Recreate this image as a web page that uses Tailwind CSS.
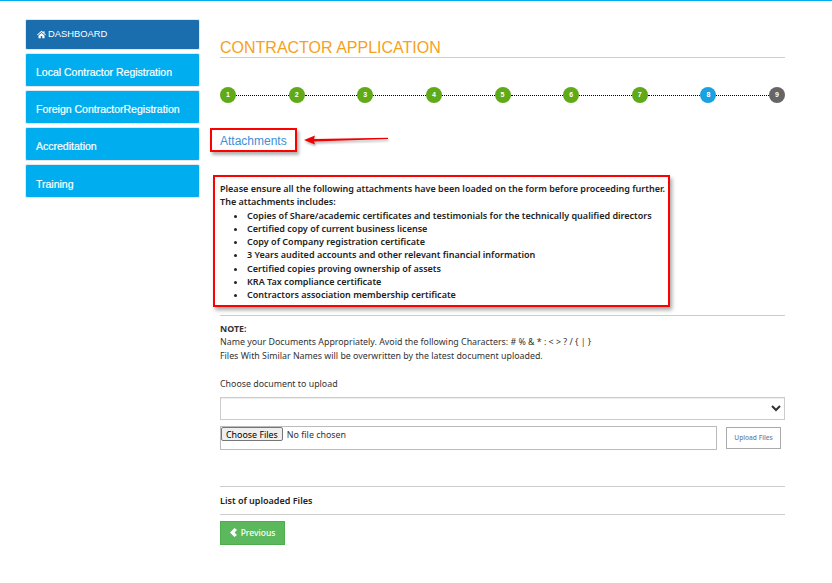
<!DOCTYPE html>
<html lang="en">
<head>
  <meta charset="UTF-8">
  <title>Contractor Application</title>
  <script src="https://cdn.jsdelivr.net/npm/@tailwindcss/browser@4"></script>
</head>
<body class="bg-white font-['Noto_Sans',sans-serif] text-[8.83px] text-[#333]">
  <div class="h-[583px] overflow-hidden border-t border-[#00aeef] flex items-start">
    <!-- sidebar -->
    <nav class="ml-[25px] mt-[18px] w-[175px] flex flex-col gap-[3px] font-['Liberation_Sans',sans-serif] text-white">
      <a class="h-[31px] flex items-center gap-[2px] pl-[11px] rounded-[2px] bg-[#1a6eae] border border-[#e4e8ec] text-[9.4px]">
        <svg class="w-[9px] h-[9px]" viewBox="0 0 12 12" fill="white"><path d="M6 1 0 6.200l.8.900L6 2.600l5.200 4.500.8-.9-2-1.700V1.500H8.500v1.400zM2 7.400V11h3V8h2v3h3V7.400L6 3.900z"/></svg>
        DASHBOARD
      </a>
      <a class="h-[34px] flex items-center pl-[10px] pt-[5px] rounded-[2px] bg-[#00aeef] border border-[#e4e8ec] text-[10.5px] [-webkit-text-stroke:0.2px_white]">Local Contractor Registration</a>
      <a class="h-[34px] flex items-center pl-[10px] pt-[5px] rounded-[2px] bg-[#00aeef] border border-[#e4e8ec] text-[10.5px] [-webkit-text-stroke:0.2px_white]">Foreign ContractorRegistration</a>
      <a class="h-[34px] flex items-center pl-[10px] pt-[5px] rounded-[2px] bg-[#00aeef] border border-[#e4e8ec] text-[10.5px] [-webkit-text-stroke:0.2px_white]">Accreditation</a>
      <a class="h-[34px] flex items-center pl-[10px] pt-[7px] rounded-[2px] bg-[#00aeef] border border-[#e4e8ec] text-[10.5px] [-webkit-text-stroke:0.2px_white]">Training</a>
    </nav>

    <!-- main -->
    <main class="ml-[20px] w-[565px]">
      <h1 class="mt-[37px] h-[20px] border-b border-[#bcd5dc] font-['Liberation_Sans',sans-serif] text-[16px] leading-[19px] text-[#f7a11a]">CONTRACTOR APPLICATION</h1>

      <!-- steps -->
      <div class="mt-[29px] flex items-center font-['Liberation_Sans',sans-serif] text-[7px] font-bold text-white">
        <span class="w-[16px] h-[16px] rounded-full bg-[#60a917] flex items-center justify-center">1</span>
        <span class="flex-1 border-t-[1.5px] border-dotted border-black"></span>
        <span class="w-[16px] h-[16px] rounded-full bg-[#60a917] flex items-center justify-center">2</span>
        <span class="flex-1 border-t-[1.5px] border-dotted border-black"></span>
        <span class="w-[16px] h-[16px] rounded-full bg-[#60a917] flex items-center justify-center">3</span>
        <span class="flex-1 border-t-[1.5px] border-dotted border-black"></span>
        <span class="w-[16px] h-[16px] rounded-full bg-[#60a917] flex items-center justify-center">4</span>
        <span class="flex-1 border-t-[1.5px] border-dotted border-black"></span>
        <span class="w-[16px] h-[16px] rounded-full bg-[#60a917] flex items-center justify-center">5</span>
        <span class="flex-1 border-t-[1.5px] border-dotted border-black"></span>
        <span class="w-[16px] h-[16px] rounded-full bg-[#60a917] flex items-center justify-center">6</span>
        <span class="flex-1 border-t-[1.5px] border-dotted border-black"></span>
        <span class="w-[16px] h-[16px] rounded-full bg-[#60a917] flex items-center justify-center">7</span>
        <span class="flex-1 border-t-[1.5px] border-dotted border-black"></span>
        <span class="w-[16px] h-[16px] rounded-full bg-[#1ba1e2] flex items-center justify-center">8</span>
        <span class="flex-1 border-t-[1.5px] border-dotted border-black"></span>
        <span class="w-[16px] h-[16px] rounded-full bg-[#666] flex items-center justify-center">9</span>
      </div>

      <!-- attachments heading + arrow -->
      <div class="mt-[25px] -ml-[10px] flex items-center">
        <div class="w-[87px] h-[24px] border-2 border-[#ff0000] shadow-[2px_3px_3px_rgba(0,0,0,0.3)] pl-[8px] pt-[1px] flex items-center font-['Liberation_Sans',sans-serif] text-[12px] text-[#3d8fd8]">Attachments</div>
        <svg class="ml-[6px] drop-shadow-[1px_2px_1px_rgba(0,0,0,0.3)]" width="86" height="14" viewBox="0 0 86 14"><path d="M1 7 12 2.500 11 6 85 4.800V6L11 8.500 12 11.500z" fill="#f00000"/></svg>
      </div>

      <!-- required list -->
      <div class="mt-[23px] -ml-[7px] w-[457px] h-[132px] border-2 border-[#ff0000] shadow-[2px_3px_4px_rgba(0,0,0,0.35)] pl-[5px] pt-[5px] text-[9.02px] font-semibold leading-[13.3px] text-[#222]">
        <p>Please ensure all the following attachments have been loaded on the form before proceeding further.</p>
        <p>The attachments includes:</p>
        <ul class="list-disc pl-[27px]">
          <li>Copies of Share/academic certificates and testimonials for the technically qualified directors</li>
          <li>Certified copy of current business license</li>
          <li>Copy of Company registration certificate</li>
          <li>3 Years audited accounts and other relevant financial information</li>
          <li>Certified copies proving ownership of assets</li>
          <li>KRA Tax compliance certificate</li>
          <li>Contractors association membership certificate</li>
        </ul>
      </div>

      <div class="mt-[8px] border-t border-[#ccc] pt-[7px] leading-[13.3px]">
        <p class="font-bold">NOTE:</p>
        <p>Name your Documents Appropriately. Avoid the following Characters: # % &amp; * : &lt; &gt; ? / { | }</p>
        <p>Files With Similar Names will be overwritten by the latest document uploaded.</p>
      </div>

      <label class="block mt-[15px] leading-[13px]">Choose document to upload</label>
      <select class="block mt-[6px] w-full h-[23px] border border-[#ccc] shadow-[inset_0_1px_1px_rgba(0,0,0,0.075)]"><option></option></select>

      <div class="mt-[6px] flex items-start">
        <input type="file" multiple class="w-[497px] h-[24px] pb-[2px] border border-[#bbb] text-[8.9px] file:h-[14px] file:px-[4px] file:mr-[4px] file:bg-[#efefef] file:border file:border-[#767676] file:rounded-[2px] file:text-black">
        <button class="ml-[9px] mt-[1px] w-[55px] h-[22px] border border-[#aaa] text-[6.6px] font-medium text-[#6b7fa0]">Upload Files</button>
      </div>

      <div class="mt-[36px] border-t border-[#ccc] h-[28px] flex items-center text-[9px] font-semibold text-[#222]">List of uploaded Files</div>
      <div class="border-t border-[#ccc]"></div>

      <button class="mt-[6px] w-[65px] h-[24px] bg-[#5cb85c] border border-[#4cae4c] text-white text-[8.5px] font-medium flex items-center justify-center gap-[4px]">
        <svg width="7" height="9" viewBox="0 0 7 9" fill="white"><path d="M4.500 0 7 2 4.500 4.500 7 7 4.500 9 0 4.500z"/></svg>
        Previous
      </button>
    </main>
  </div>
</body>
</html>
